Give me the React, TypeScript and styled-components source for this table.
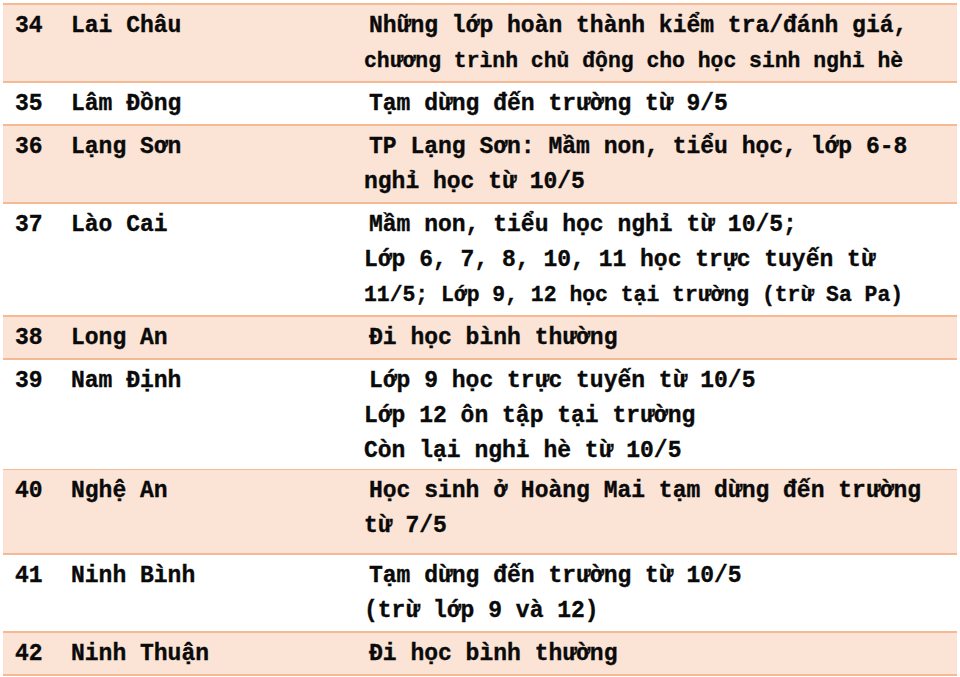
import styled, { createGlobalStyle } from 'styled-components';

type Line = { text: string; small?: boolean };

interface Province {
  no: number;
  name: string;
  lines: Line[];
  extra?: number;
}

const provinces: Province[] = [
  {
    no: 34,
    name: 'Lai Châu',
    lines: [
      { text: 'Những lớp hoàn thành kiểm tra/đánh giá,' },
      { text: 'chương trình chủ động cho học sinh nghỉ hè', small: true },
    ],
  },
  { no: 35, name: 'Lâm Đồng', lines: [{ text: 'Tạm dừng đến trường từ 9/5' }] },
  {
    no: 36,
    name: 'Lạng Sơn',
    lines: [{ text: 'TP Lạng Sơn: Mầm non, tiểu học, lớp 6-8' }, { text: 'nghỉ học từ 10/5' }],
  },
  {
    no: 37,
    name: 'Lào Cai',
    lines: [
      { text: 'Mầm non, tiểu học nghỉ từ 10/5;' },
      { text: 'Lớp 6, 7, 8, 10, 11 học trực tuyến từ' },
      { text: '11/5; Lớp 9, 12 học tại trường (trừ Sa Pa)', small: true },
    ],
  },
  { no: 38, name: 'Long An', lines: [{ text: 'Đi học bình thường' }] },
  {
    no: 39,
    name: 'Nam Định',
    lines: [
      { text: 'Lớp 9 học trực tuyến từ 10/5' },
      { text: 'Lớp 12 ôn tập tại trường' },
      { text: 'Còn lại nghỉ hè từ 10/5' },
    ],
    extra: -3,
  },
  {
    no: 40,
    name: 'Nghệ An',
    lines: [{ text: 'Học sinh ở Hoàng Mai tạm dừng đến trường' }, { text: 'từ 7/5' }],
    extra: 7,
  },
  {
    no: 41,
    name: 'Ninh Bình',
    lines: [{ text: 'Tạm dừng đến trường từ 10/5' }, { text: '(trừ lớp 9 và 12)' }],
  },
  { no: 42, name: 'Ninh Thuận', lines: [{ text: 'Đi học bình thường' }] },
];

export default function App() {
  return (
    <>
      <GlobalStyle />
      <Table>
        {provinces.map((p, i) => (
          <Row key={p.no} $shade={i % 2 === 0} $extra={p.extra ?? 0}>
            <NoCell>{p.no}</NoCell>
            <NameCell>{p.name}</NameCell>
            <DescCell>
              {p.lines.map((l, j) => (
                <DescLine key={j} $small={l.small} $first={j === 0}>
                  {l.text}
                </DescLine>
              ))}
            </DescCell>
          </Row>
        ))}
      </Table>
    </>
  );
}

const GlobalStyle = createGlobalStyle`
  body {
    margin: 0;
    background: #ffffff;
    font-family: "Liberation Mono", "DejaVu Sans Mono", monospace;
  }
`;

const Table = styled.div`
  margin: 3px 3px 0 3px;
  width: 954px;
  display: flex;
  flex-direction: column;
  border-top: 2px solid #f5b993;
`;

const Row = styled.div<{ $shade: boolean; $extra: number }>`
  display: grid;
  grid-template-columns: 68px 293px 1fr;
  padding: 4px 0 ${(p) => Math.max(0, 2 + p.$extra)}px 0;
  height: auto;
  margin-bottom: ${(p) => Math.min(0, 2 + p.$extra)}px;
  background: ${(p) => (p.$shade ? '#fbe4d5' : '#ffffff')};
  border-bottom: 2px solid #f5b993;
  font-weight: bold;
  color: #0a0a0a;
  -webkit-text-stroke: 0.35px #0a0a0a;
  font-size: 23px;
  line-height: 35px;
`;

const NoCell = styled.div`
  padding-left: 12px;
`;

const NameCell = styled.div`
  white-space: nowrap;
`;

const DescCell = styled.div`
  display: flex;
  flex-direction: column;
`;

const DescLine = styled.div<{ $small?: boolean; $first: boolean }>`
  white-space: nowrap;
  font-size: ${(p) => (p.$small ? '21.4px' : '23px')};
  padding-left: ${(p) => (p.$first ? '5px' : '0')};
`;
